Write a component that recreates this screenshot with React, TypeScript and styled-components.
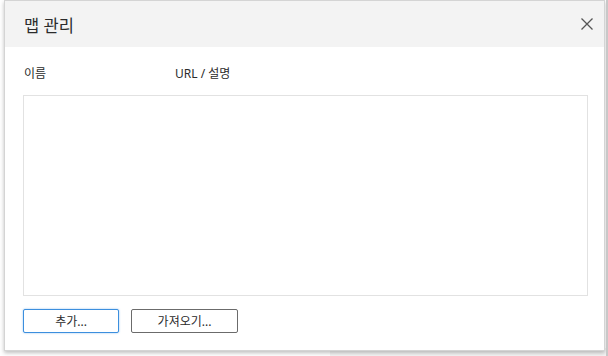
import styled, { createGlobalStyle } from "styled-components";

const Global = createGlobalStyle`
  html, body {
    margin: 0;
    padding: 0;
    background: #fff;
    font-family: "Noto Sans", "Noto Sans CJK KR", sans-serif;
  }
`;

const Page = styled.div`
  width: 608px;
  height: 356px;
  position: relative;
  overflow: hidden;
  background: #fff;
  border-right: 2px solid #c8c8c8;
  box-sizing: border-box;
`;

const Backdrop = styled.div`
  position: absolute;
  left: 330px;
  right: 0;
  bottom: 0;
  height: 8px;
  background: #f4f4f4;
`;

const Dialog = styled.div`
  position: absolute;
  left: 4px;
  top: 0;
  width: 601px;
  height: 351px;
  background: #fff;
  border: 1px solid #d4d4d4;
  box-sizing: border-box;
  box-shadow: 0 2px 4px rgba(0, 0, 0, 0.25);
  display: flex;
  flex-direction: column;
`;

const Header = styled.div`
  height: 46px;
  flex-shrink: 0;
  background: #f3f3f3;
  display: flex;
  align-items: center;
  justify-content: space-between;
  padding: 0 5px 0 19px;
`;

const Title = styled.div`
  font-size: 16.5px;
  color: #2b2b2b;
  padding-top: 1px;
`;

const Close = styled.button`
  width: 24px;
  height: 24px;
  border: none;
  background: none;
  padding: 0;
  display: flex;
  align-items: center;
  justify-content: center;
  cursor: pointer;
`;

const Body = styled.div`
  flex: 1;
  padding: 0 16px 0 18px;
  display: flex;
  flex-direction: column;
`;

const Columns = styled.div`
  height: 48px;
  box-sizing: border-box;
  padding: 4px 0 0 1px;
  display: grid;
  grid-template-columns: 151px 1fr;
  align-items: center;
  font-size: 12px;
  color: #2b2b2b;
`;

const List = styled.div`
  height: 201px;
  border: 1px solid #e2e2e2;
  box-sizing: border-box;
`;

const Buttons = styled.div`
  display: flex;
  gap: 12px;
  margin-top: 13px;
`;

const Button = styled.button<{ $focused?: boolean; $w: number }>`
  width: ${(p) => p.$w}px;
  height: 24px;
  font-family: "Noto Sans", "Noto Sans CJK KR", sans-serif;
  font-size: 12px;
  color: #2b2b2b;
  background: #fff;
  border-radius: 2px;
  border: 1px solid ${(p) => (p.$focused ? "#3c8fde" : "#6b6b6b")};
  box-shadow: ${(p) => (p.$focused ? "0 0 2px rgba(60,143,222,0.6)" : "none")};
  padding: 0;
`;

export default function App() {
  return (
    <Page>
      <Global />
      <Backdrop />
      <Dialog>
        <Header>
          <Title>맵 관리</Title>
          <Close aria-label="close">
            <svg width="14" height="14" viewBox="0 0 14 14">
              <path d="M1.5 1.5 L12.5 12.5 M12.5 1.5 L1.5 12.5" stroke="#555" strokeWidth="1.3" />
            </svg>
          </Close>
        </Header>
        <Body>
          <Columns>
            <span>이름</span>
            <span>URL / 설명</span>
          </Columns>
          <List />
          <Buttons>
            <Button $focused $w={96}>추가...</Button>
            <Button $w={107}>가져오기...</Button>
          </Buttons>
        </Body>
      </Dialog>
    </Page>
  );
}
